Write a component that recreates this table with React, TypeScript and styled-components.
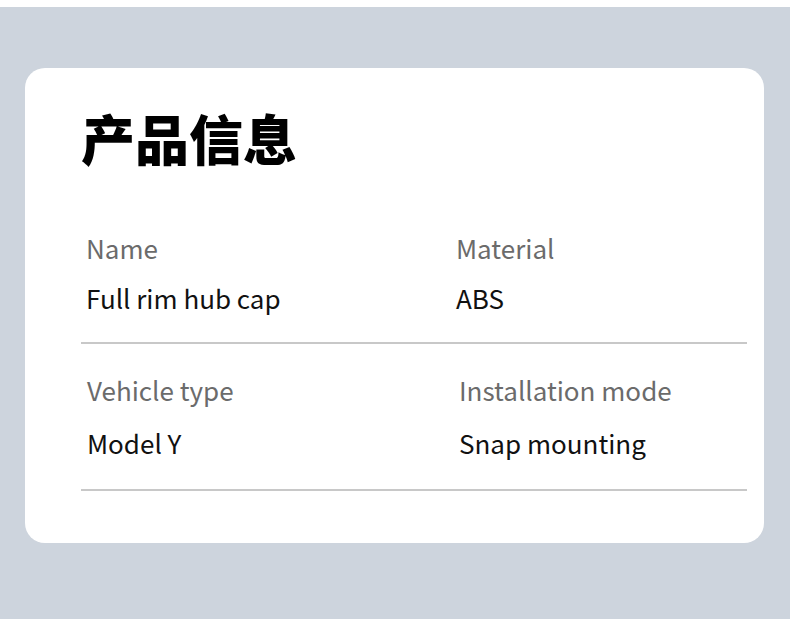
import styled, { createGlobalStyle } from 'styled-components';

const GlobalStyle = createGlobalStyle`
    html, body {
        margin: 0;
        padding: 0;
        background: #cdd4dd;
    }
    body {
        font-family: 'Noto Sans CJK SC', 'Noto Sans', sans-serif;
    }
`;

interface Field {
    label: string;
    value: string;
    shift?: number;
}

interface InfoRow {
    top: number;
    gap: number;
    bottom: number;
    fields: Field[];
}

const rows: InfoRow[] = [
    {
        top: 0,
        gap: 0,
        bottom: 19,
        fields: [
            { label: 'Name', value: 'Full rim hub cap' },
            { label: 'Material', value: 'ABS' },
        ],
    },
    {
        top: 21,
        gap: 3,
        bottom: 21,
        fields: [
            { label: 'Vehicle type', value: 'Model Y', shift: 1 },
            { label: 'Installation mode', value: 'Snap mounting', shift: 3 },
        ],
    },
];

const App = () => {
    return (
        <>
            <GlobalStyle />
            <Page>
                <TopStrip />
                <Card>
                    <Title>产品信息</Title>
                    {rows.map((row, i) => (
                        <Row key={i} $top={row.top} $bottom={row.bottom}>
                            {row.fields.map((field) => (
                                <Cell
                                    key={field.label}
                                    $shift={field.shift ?? 0}
                                    $gap={row.gap}
                                >
                                    <Label>{field.label}</Label>
                                    <Value>{field.value}</Value>
                                </Cell>
                            ))}
                        </Row>
                    ))}
                </Card>
            </Page>
        </>
    );
};

const Page = styled.div`
    width: 790px;
    height: 619px;
    display: flex;
    flex-direction: column;
    overflow: hidden;
`;

const TopStrip = styled.div`
    height: 7px;
    background: #ffffff;
`;

const Card = styled.div`
    margin: 61px 26px 0 25px;
    height: 475px;
    box-sizing: border-box;
    background: #ffffff;
    border-radius: 20px;
    padding: 35px 17px 0 56px;
`;

const Title = styled.h1`
    margin: 0 0 50px;
    font-size: 54px;
    line-height: 70px;
    font-weight: 900;
    color: #000000;
`;

const Row = styled.div<{ $top: number; $bottom: number }>`
    display: grid;
    grid-template-columns: 370px 1fr;
    padding: ${(p) => p.$top}px 0 ${(p) => p.$bottom}px 5px;
    border-bottom: 2px solid #c8c8c8;
`;

const Cell = styled.div<{ $shift: number; $gap: number }>`
    display: flex;
    flex-direction: column;
    gap: ${(p) => p.$gap}px;
    padding-left: ${(p) => p.$shift}px;
`;

const Label = styled.div`
    font-size: 26px;
    line-height: 50px;
    color: #6b6b6b;
`;

const Value = styled.div`
    font-size: 26px;
    line-height: 50px;
    color: #111111;
`;

export default App;
